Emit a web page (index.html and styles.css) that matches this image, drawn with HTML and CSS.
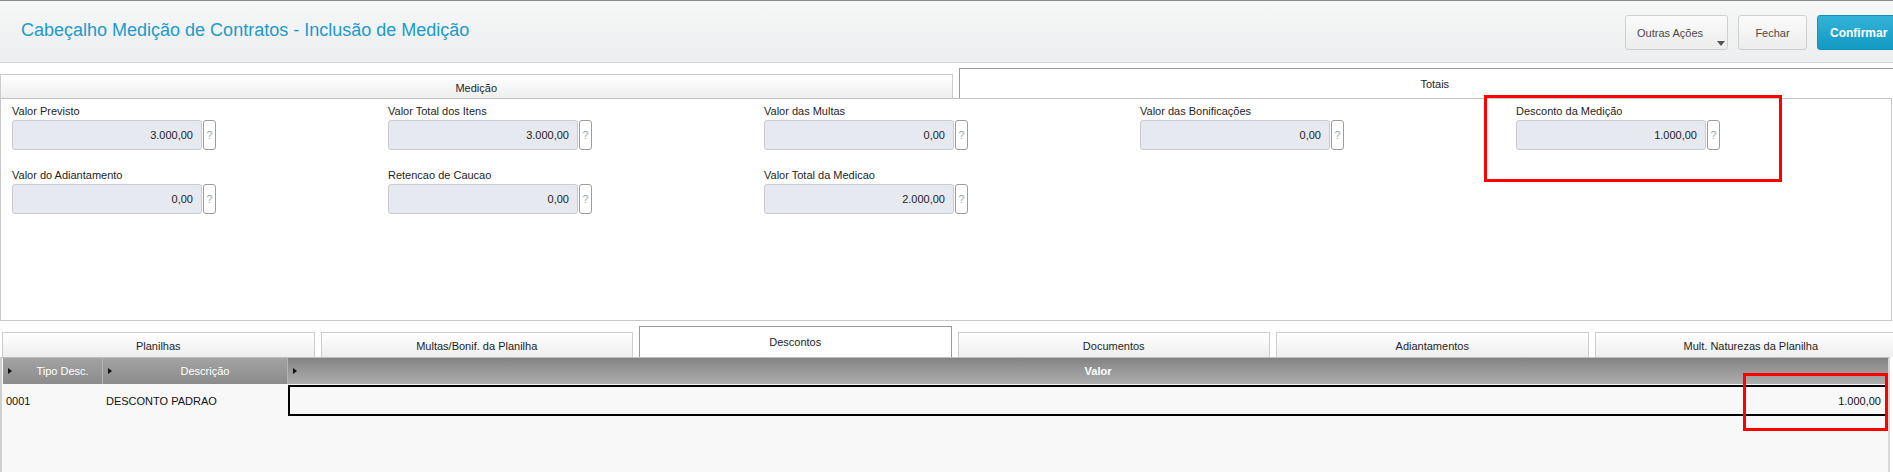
FILE: index.html
```html
<!DOCTYPE html>
<html lang="pt-BR">
<head>
<meta charset="utf-8">
<title>Cabeçalho Medição de Contratos</title>
<link rel="stylesheet" href="styles.css">
</head>
<body>
<div class="page">
  <header class="topbar">
    <h1 class="title">Cabeçalho Medição de Contratos - Inclusão de Medição</h1>
    <div class="actions">
      <button class="btn btn-more">Outras Ações<span class="caret"></span></button>
      <button class="btn btn-close">Fechar</button>
      <button class="btn btn-primary">Confirmar</button>
    </div>
  </header>

  <div class="tabs tabs-top">
    <div class="tab">Medição</div>
    <div class="tab active">Totais</div>
  </div>

  <section class="panel">
    <div class="fields">
      <div class="field">
        <label class="label">Valor Previsto</label>
        <div class="control"><div class="input">3.000,00</div><div class="help">?</div></div>
      </div>
      <div class="field">
        <label class="label">Valor Total dos Itens</label>
        <div class="control"><div class="input">3.000,00</div><div class="help">?</div></div>
      </div>
      <div class="field">
        <label class="label">Valor das Multas</label>
        <div class="control"><div class="input">0,00</div><div class="help">?</div></div>
      </div>
      <div class="field">
        <label class="label">Valor das Bonificações</label>
        <div class="control"><div class="input">0,00</div><div class="help">?</div></div>
      </div>
      <div class="field">
        <label class="label">Desconto da Medição</label>
        <div class="control"><div class="input">1.000,00</div><div class="help">?</div></div>
      </div>
      <div class="field">
        <label class="label">Valor do Adiantamento</label>
        <div class="control"><div class="input">0,00</div><div class="help">?</div></div>
      </div>
      <div class="field">
        <label class="label">Retencao de Caucao</label>
        <div class="control"><div class="input">0,00</div><div class="help">?</div></div>
      </div>
      <div class="field">
        <label class="label">Valor Total da Medicao</label>
        <div class="control"><div class="input">2.000,00</div><div class="help">?</div></div>
      </div>
    </div>
  </section>

  <div class="tabs tabs-bottom">
    <div class="tab">Planilhas</div>
    <div class="tab">Multas/Bonif. da Planilha</div>
    <div class="tab active">Descontos</div>
    <div class="tab">Documentos</div>
    <div class="tab">Adiantamentos</div>
    <div class="tab">Mult. Naturezas da Planilha</div>
  </div>

  <div class="grid">
    <div class="grid-head">
      <div class="th col-tipo"><span class="arrow"></span>Tipo Desc.</div>
      <div class="th col-desc"><span class="arrow"></span>Descrição</div>
      <div class="th col-valor"><span class="arrow"></span>Valor</div>
    </div>
    <div class="grid-row">
      <div class="td col-tipo">0001</div>
      <div class="td col-desc">DESCONTO PADRAO</div>
      <div class="td col-valor selected">1.000,00</div>
    </div>
  </div>

  <div class="mark mark-totais"></div>
  <div class="mark mark-valor"></div>
</div>
</body>
</html>
```

FILE: styles.css
```css
html, body {
  margin: 0;
  padding: 0;
  overflow: hidden;
  background: #ffffff;
}

body {
  font-family: "Liberation Sans", Arial, sans-serif;
  font-size: 11px;
  color: #1e1e1e;
}

.page {
  position: relative;
  width: 1911px;
  height: 472px;
}

/* ---------- header ---------- */
.topbar {
  box-sizing: border-box;
  height: 63px;
  border-top: 1px solid #8e8e8e;
  border-bottom: 1px solid #d4d4d4;
  background: linear-gradient(#f6f7f7, #eceeef);
  display: flex;
  align-items: center;
  justify-content: space-between;
  padding: 0 11px 0 21px;
}

.title {
  margin: 0;
  font-size: 18px;
  font-weight: normal;
  color: #1d9acb;
  position: relative;
  top: -1px;
}

.actions {
  display: flex;
  gap: 10px;
  align-items: center;
  position: relative;
  top: 1px;
}

.btn {
  position: relative;
  box-sizing: border-box;
  height: 35px;
  border: 1px solid #cfcfcf;
  border-radius: 3px;
  background: linear-gradient(#fbfbfb, #ececec);
  font-family: "Liberation Sans", Arial, sans-serif;
  font-size: 11px;
  color: #4a4a4a;
  padding: 0 15px;
  margin: 0;
}

.btn-more {
  width: 103px;
  text-align: left;
  padding-left: 11px;
}

.caret {
  position: absolute;
  left: 91px;
  top: 25px;
  width: 0;
  height: 0;
  border-left: 4px solid transparent;
  border-right: 4px solid transparent;
  border-top: 5px solid #555;
}

.btn-close {
  width: 69px;
}

.btn-primary {
  width: 83px;
  text-align: left;
  padding-left: 12px;
  border-color: #1690b8;
  background: linear-gradient(#33b3d9, #1399c3);
  color: #ffffff;
  font-size: 12px;
  font-weight: bold;
}

/* ---------- tabs ---------- */
.tabs {
  display: grid;
  align-items: end;
  gap: 6px;
}

.tabs-top {
  grid-template-columns: 1fr 1fr;
  height: 30px;
  margin-top: 5px;
}

.tabs-bottom {
  grid-template-columns: repeat(6, 1fr);
  width: 1905px;
  height: 31px;
  margin: 5px 0 0 2px;
}

.tab {
  box-sizing: border-box;
  height: 24px;
  border: 1px solid #cdcdcd;
  border-bottom: none;
  background: linear-gradient(#ffffff, #eeeeee);
  display: flex;
  align-items: center;
  justify-content: center;
  padding-top: 2px;
  color: #1e1e1e;
}

.tabs-bottom .tab {
  height: 25px;
}

.tab.active {
  height: 30px;
  border-color: #9a9a9a;
  background: #ffffff;
  padding-top: 0;
}

.tabs-bottom .tab.active {
  height: 31px;
  padding-bottom: 1px;
}

/* ---------- fields panel ---------- */
.panel {
  box-sizing: border-box;
  width: 1892px;
  height: 223px;
  border: 1px solid #c8c8c8;
  border-top-color: #c4c4c4;
}

.fields {
  display: grid;
  grid-template-columns: repeat(5, 376px);
  row-gap: 19px;
  padding: 6px 0 0 11px;
}

.field {
  display: flex;
  flex-direction: column;
}

.label {
  line-height: 13px;
  margin-bottom: 2px;
  color: #1e1e1e;
}

.control {
  display: flex;
  gap: 1px;
}

.input {
  box-sizing: border-box;
  width: 190px;
  height: 30px;
  border: 1px solid #c9cbcf;
  border-radius: 3px;
  background: #e6e9ef;
  display: flex;
  align-items: center;
  justify-content: flex-end;
  padding-right: 8px;
  color: #1e1e1e;
}

.help {
  box-sizing: border-box;
  width: 13px;
  height: 30px;
  border: 1px solid #9c9c9c;
  border-radius: 3px;
  background: #ffffff;
  display: flex;
  align-items: center;
  justify-content: center;
  color: #a8a8a8;
  font-size: 11px;
}

/* ---------- grid ---------- */
.grid {
  box-sizing: border-box;
  width: 1890px;
  height: 115px;
  border-top: 1px solid #bdbdbd;
  border-left: 2px solid #cfcfcf;
  border-right: 2px solid #d8d8d8;
  background: #f8f8f8;
  padding-left: 1px;
}

.grid-head {
  display: flex;
  height: 26px;
}

.th {
  position: relative;
  box-sizing: border-box;
  height: 26px;
  display: flex;
  align-items: center;
  justify-content: center;
  padding-left: 20px;
  color: #ffffff;
  border-right: 1px solid #b4b4b4;
}

.arrow {
  position: absolute;
  left: 5px;
  top: 10px;
  width: 0;
  height: 0;
  border-top: 3px solid transparent;
  border-bottom: 3px solid transparent;
  border-left: 4px solid #111;
}

.col-tipo {
  width: 100px;
}

.col-desc {
  width: 185px;
}

.col-valor {
  flex: 1;
}

.th.col-tipo,
.th.col-desc {
  background: linear-gradient(#a3a3a3, #8b8b8b);
}

.th.col-valor {
  background: linear-gradient(#838383, #aeaeae);
  font-weight: bold;
  border-right: none;
}

.grid-row {
  display: flex;
  height: 31px;
  margin-top: 1px;
}

.td {
  box-sizing: border-box;
  display: flex;
  align-items: center;
  padding-left: 3px;
  color: #111;
}

.td.selected {
  border: 2px solid #000;
  justify-content: flex-end;
  padding-right: 4px;
  margin-right: 1px;
}

/* ---------- annotation rectangles ---------- */
.mark {
  position: absolute;
  box-sizing: border-box;
  border: 3px solid #ff0000;
}

.mark-totais {
  left: 1484px;
  top: 95px;
  width: 298px;
  height: 87px;
}

.mark-valor {
  left: 1743px;
  top: 373px;
  width: 145px;
  height: 58px;
}
```
